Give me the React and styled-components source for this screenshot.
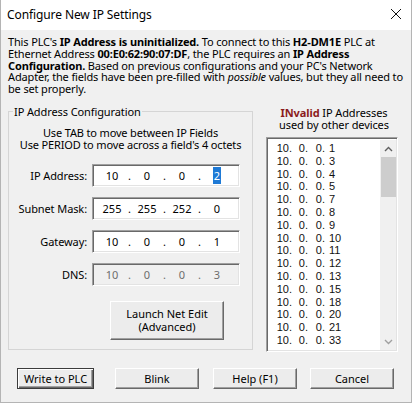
import styled, { createGlobalStyle } from "styled-components";

const invalidAddresses = [1, 3, 4, 5, 7, 8, 9, 10, 11, 12, 13, 15, 18, 20, 21, 33];

const fields = [
  { label: "IP Address:", octets: ["10", "0", "0", "2"], selected: 3 },
  { label: "Subnet Mask:", octets: ["255", "255", "252", "0"] },
  { label: "Gateway:", octets: ["10", "0", "0", "1"] },
  { label: "DNS:", octets: ["10", "0", "0", "3"], disabled: true }
];

export default function App() {
  return (
    <>
      <GlobalStyle />
      <Window>
        <TitleBar>
          <Title>Configure New IP Settings</Title>
          <CloseIcon width="12" height="12" viewBox="0 0 12 12">
            <path d="M1 1 L11 11 M11 1 L1 11" stroke="#111" strokeWidth="1" />
          </CloseIcon>
        </TitleBar>
        <Body>
          <Intro>
            <Line>
              This PLC's <b>IP Address is uninitialized.</b> To connect to this <b>H2-DM1E</b> PLC at
            </Line>
            <Line>
              Ethernet Address <b>00:E0:62:90:07:DF</b>, the PLC requires an <b>IP Address</b>
            </Line>
            <Line>
              <b>Configuration.</b> Based on previous configurations and your PC's Network
            </Line>
            <Line>
              Adapter, the fields have been pre-filled with <i>possible</i> values, but they all need to
            </Line>
            <Line>be set properly.</Line>
          </Intro>
          <Main>
            <GroupBox>
              <Legend>IP Address Configuration</Legend>
              <Hint>
                Use TAB to move between IP Fields
                <br />
                Use PERIOD to move across a field's 4 octets
              </Hint>
              <FieldGrid>
                {fields.map((f) => (
                  <FieldRow key={f.label}>
                    <FieldLabel>{f.label}</FieldLabel>
                    <IpBox $disabled={f.disabled}>
                      {f.octets.map((o, i) => (
                        <Octets key={i}>
                          <Octet>{i === f.selected ? <Selected>{o}</Selected> : o}</Octet>
                          {i < 3 && <Dot>.</Dot>}
                        </Octets>
                      ))}
                    </IpBox>
                  </FieldRow>
                ))}
              </FieldGrid>
              <LaunchRow>
                <Button $w={114} $h={39}>
                  Launch Net Edit
                  <br />
                  (Advanced)
                </Button>
              </LaunchRow>
            </GroupBox>
            <Side>
              <SideHeader>
                <Invalid>INvalid</Invalid> IP Addresses
                <br />
                used by other devices
              </SideHeader>
              <ListBox>
                <ListItems>
                  {invalidAddresses.map((n) => (
                    <ListItem key={n}>
                      <span>10.</span>
                      <span>0.</span>
                      <span>0.</span>
                      <Last>{n}</Last>
                    </ListItem>
                  ))}
                </ListItems>
                <ScrollBar>
                  <Arrow viewBox="0 0 9 6" width="9" height="6">
                    <path d="M1 5 L4.5 1.5 L8 5" fill="none" stroke="#606060" strokeWidth="1.4" />
                  </Arrow>
                  <Thumb />
                  <Track />
                  <Arrow viewBox="0 0 9 6" width="9" height="6">
                    <path d="M1 1 L4.5 4.5 L8 1" fill="none" stroke="#a0a0a0" strokeWidth="1.4" />
                  </Arrow>
                </ScrollBar>
              </ListBox>
            </Side>
          </Main>
          <Footer>
            <Button $w={77} $default>Write to PLC</Button>
            <Button $w={84} $ml={21}>Blink</Button>
            <Button $w={84} $ml={14}>Help (F1)</Button>
            <Button $w={84} $ml={13}>Cancel</Button>
          </Footer>
        </Body>
      </Window>
    </>
  );
}

const GlobalStyle = createGlobalStyle`
  html, body {
    margin: 0;
    padding: 0;
    background: #f0f0f0;
  }
  body {
    font-family: "Noto Sans", "DejaVu Sans", sans-serif;
    color: #000;
  }
  * { box-sizing: border-box; }
`;

const Window = styled.div`
  width: 412px;
  height: 403px;
  display: flex;
  flex-direction: column;
  border: 1px solid #b4b4b4;
  border-top: none;
  background: #f0f0f0;
`;
const TitleBar = styled.div`
  height: 30px;
  background: #fff;
  display: flex;
  align-items: center;
  justify-content: space-between;
  padding: 0 9px 2px 6px;
`;
const Title = styled.div`
  font-size: 12px;
  letter-spacing: -0.1px;
`;
const CloseIcon = styled.svg`
  display: block;
`;
const Body = styled.div`
  flex: 1;
  display: flex;
  flex-direction: column;
  padding: 6px 0 0 7px;
`;
const Intro = styled.div`
  font-size: 11px;
  line-height: 11.8px;
  letter-spacing: -0.15px;
`;
const Line = styled.div`
  white-space: nowrap;
`;
const Main = styled.div`
  display: flex;
  margin-top: 10px;
`;
const GroupBox = styled.fieldset`
  margin: 0;
  width: 245px;
  height: 245px;
  border: 1px solid #d5d5d5;
  padding: 0;
  display: flex;
  flex-direction: column;
`;
const Legend = styled.legend`
  font-size: 11px;
  line-height: 14px;
  padding: 0 1px;
  margin-left: 4px;
  letter-spacing: -0.1px;
`;
const Hint = styled.div`
  margin-top: 8px;
  text-align: center;
  font-size: 11px;
  line-height: 12px;
  letter-spacing: -0.15px;
`;
const FieldGrid = styled.div`
  display: flex;
  flex-direction: column;
  gap: 10px;
  margin-top: 13px;
`;
const FieldRow = styled.div`
  display: flex;
  align-items: center;
`;
const FieldLabel = styled.div`
  width: 78px;
  text-align: right;
  font-size: 11px;
  letter-spacing: -0.1px;
  margin-right: 5px;
`;
const IpBox = styled.div`
  width: 148px;
  height: 23px;
  display: flex;
  align-items: center;
  padding-left: 7px;
  background: ${(p) => (p.$disabled ? "#f0f0f0" : "#fff")};
  color: ${(p) => (p.$disabled ? "#6d6d6d" : "#000")};
  border-style: solid;
  border-width: 1px;
  border-color: #a0a0a0 #fff #fff #a0a0a0;
  box-shadow: inset 1px 1px #696969, inset -1px -1px #e3e3e3;
  font-size: 11px;
`;
const Octets = styled.div`
  display: flex;
`;
const Octet = styled.span`
  width: 24px;
  text-align: center;
`;
const Dot = styled.span`
  width: 11px;
  text-align: center;
`;
const Selected = styled.span`
  background: #1e7ad6;
  color: #fff;
  padding: 1px 1px;
`;
const LaunchRow = styled.div`
  display: flex;
  padding-left: 101px;
  margin-top: 15px;
`;
const Button = styled.button`
  width: ${(p) => p.$w}px;
  height: ${(p) => p.$h || 21}px;
  margin-left: ${(p) => p.$ml || 0}px;
  padding: 0;
  font-family: inherit;
  font-size: 11px;
  line-height: 13px;
  color: #000;
  background: #ececec;
  border: 1px solid;
  border-color: ${(p) => (p.$default ? "#3c3c3c" : "#fff #696969 #696969 #fff")};
  box-shadow: ${(p) =>
    p.$default
      ? "inset 1px 1px #fff, inset -1px -1px #696969, inset -2px -2px #a0a0a0"
      : "inset -1px -1px #a0a0a0"};
`;
const Side = styled.div`
  margin-left: 13px;
  width: 132px;
  display: flex;
  flex-direction: column;
  padding-top: 2px;
`;
const SideHeader = styled.div`
  text-align: center;
  font-size: 11px;
  line-height: 12px;
  letter-spacing: -0.1px;
  padding-left: 4px;
`;
const Invalid = styled.b`
  color: #8b1c1c;
`;
const ListBox = styled.div`
  margin-top: 6px;
  width: 132px;
  height: 215px;
  display: flex;
  background: #fff;
  border-style: solid;
  border-width: 1px;
  border-color: #a0a0a0 #fff #fff #a0a0a0;
  box-shadow: inset 1px 1px #696969, inset -1px -1px #e3e3e3;
  padding: 2px 1px 1px 2px;
`;
const ListItems = styled.div`
  flex: 1;
  padding-top: 2px;
  padding-left: 4px;
`;
const ListItem = styled.div`
  display: grid;
  grid-template-columns: 19px 16px 17px auto;
  font-family: "Liberation Sans", "DejaVu Sans", sans-serif;
  font-size: 11px;
  line-height: 12.8px;
  color: #111;
  span {
    text-align: right;
  }
`;
const Last = styled.span`
  && {
    text-align: left;
    padding-left: 4px;
  }
`;
const ScrollBar = styled.div`
  width: 16px;
  display: flex;
  flex-direction: column;
  align-items: center;
  background: #f0f0f0;
`;
const Arrow = styled.svg`
  display: block;
  margin: 6px 0 5px;
`;
const Thumb = styled.div`
  width: 15px;
  height: 40px;
  background: #cdcdcd;
`;
const Track = styled.div`
  flex: 1;
`;
const Footer = styled.div`
  display: flex;
  padding-left: 9px;
  margin-top: 16px;
`;
